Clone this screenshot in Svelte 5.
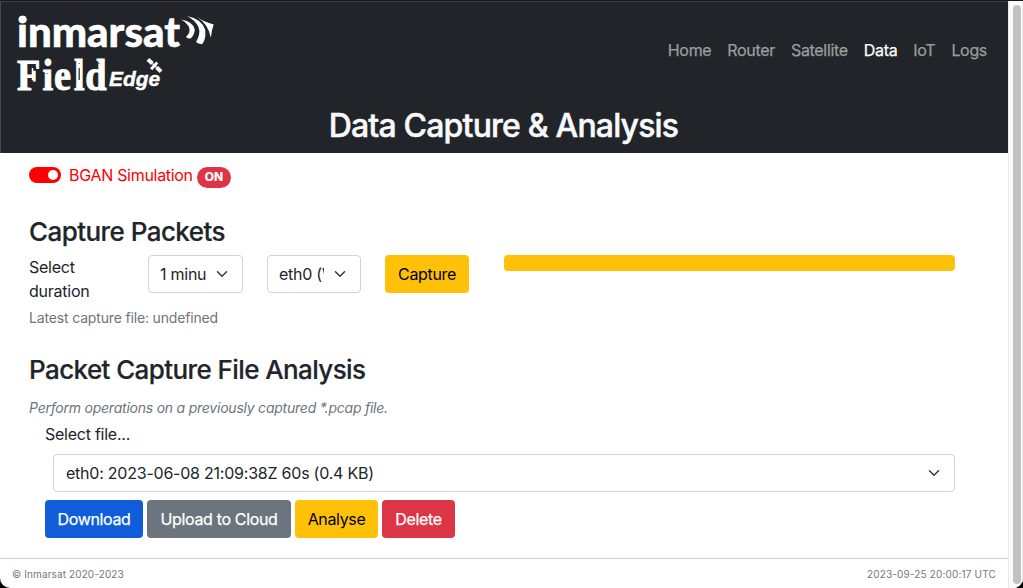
<script>
  const links = ['Home', 'Router', 'Satellite', 'Data', 'IoT', 'Logs'];
  let active = $state('Data');
  let simulation = $state(true);
</script>

{#snippet chevron()}
  <svg class="chevron" viewBox="0 0 16 16" aria-hidden="true"><path d="m2 5 6 6 6-6" /></svg>
{/snippet}

<div class="window">
  <div class="page">
    <header>
      <div class="bar">
        <svg class="logo" viewBox="0 0 220 90" role="img" aria-label="inmarsat Field Edge">
          <g fill="#fff">
            <text class="brand" x="17" y="44.500" textLength="163" lengthAdjust="spacingAndGlyphs">inmarsat</text>
            <circle cx="22.700" cy="17.500" r="3.800" />
            <path d="M181 17.600Q194 20 194.800 28Q194 34 190.500 36.500Q188 37 186 35Q191.500 30 188.500 24Q186 20 181 17.600Z" />
            <path d="M187 14Q202 17 205.300 28Q206 38 202 42.300Q198 42 196 40Q201 32 198.500 25Q195 18 187 14Z" />
            <path d="M196 14.500Q204 20 213.700 22.500Q211.500 28 211 35.700Q209.500 29 206 23.500Q202 18 196 14.500Z" />
            <text class="field" transform="translate(17 88) scale(.87 1)" x="0 29.300 42.500 65.500 78.500" y="0">Field</text>
            <text class="edge" x="109" y="84" textLength="51" lengthAdjust="spacingAndGlyphs">Edge</text>
          </g>
          <g transform="translate(154.500 63.500) rotate(43)" fill="#fff">
            <rect x="-9" y="-2" width="6" height="4" />
            <rect x="3" y="-2" width="6" height="4" />
            <rect x="-3" y="-.7" width="6" height="1.400" />
            <rect x="-1.500" y="-4" width="3" height="9" />
          </g>
          <path d="M32.500 66v12" stroke="#fff" stroke-width="1.500" />
          <g fill="#212529">
            <rect x="78.600" y="66" width="1.200" height="12" />
            <circle cx="79.200" cy="61.500" r=".6" />
            <circle cx="99" cy="61.500" r=".6" />
            <circle cx="47" cy="71.500" r=".6" />
          </g>
        </svg>
        <nav>
          {#each links as link}
            <a href="#{link}" class:active={active === link} onclick={() => (active = link)}>{link}</a>
          {/each}
        </nav>
      </div>
      <h1>Data Capture &amp; Analysis</h1>
    </header>

    <main>
      <label class="simulation">
        <input type="checkbox" bind:checked={simulation} />
        <span class="switch"></span>
        <span class="simname">BGAN Simulation</span>
        <span class="badge">{simulation ? 'ON' : 'OFF'}</span>
      </label>

      <h2 class="capture-title">Capture Packets</h2>
      <div class="capture">
        <span class="duration">Select duration</span>
        <div class="select"><span class="value">1 minute</span>{@render chevron()}</div>
        <div class="select iface"><span class="value">eth0 (WAN)</span>{@render chevron()}</div>
        <button class="warning">Capture</button>
        <div class="progress"></div>
      </div>
      <p class="latest">Latest capture file: undefined</p>

      <h2 class="analysis-title">Packet Capture File Analysis</h2>
      <p class="hint">Perform operations on a previously captured *.pcap file.</p>
      <div class="files">
        <span class="choose">Select file...</span>
        <div class="select file"><span class="value">eth0: 2023-06-08 21:09:38Z 60s (0.4 KB)</span>{@render chevron()}</div>
        <div class="buttons">
          <button class="primary">Download</button>
          <button class="secondary">Upload to Cloud</button>
          <button class="warning analyse">Analyse</button>
          <button class="danger">Delete</button>
        </div>
      </div>
    </main>

    <footer><span class="copy">© Inmarsat 2020-2023</span><span class="time">2023-09-25 20:00:17 UTC</span></footer>
  </div>
  <div class="scroll"><div class="thumb"></div></div>
</div>

<style>
  :global(body) { margin: 0; background: #000; overflow: hidden; }
  * { box-sizing: border-box; }
  .window {
    display: flex; width: 1023px; height: 588px; overflow: hidden;
    background: #fff; border-top: 1px solid #171719; border-radius: 0 0 10px 10px;
    font: 16px/24px Inter, sans-serif; letter-spacing: -.25px; color: #212529;
  }
  .page { width: 1008px; display: flex; flex-direction: column; }
  header { height: 152px; background: #212529; border-top: 1px solid #414246; border-left: 1px solid #45484c; }
  .bar { height: 98px; display: flex; justify-content: space-between; }
  .logo { width: 220px; height: 90px; margin-left: -1px; overflow: visible; }
  .brand { font: 900 41px Lato, sans-serif; letter-spacing: 0; stroke: #fff; stroke-width: .5px; }
  .field { font: bold 44px "Liberation Serif", serif; letter-spacing: 0; stroke: #fff; stroke-width: 1px; }
  .edge { font: italic bold 20px "Liberation Sans", sans-serif; letter-spacing: 0; stroke: #fff; stroke-width: .4px; }
  nav { display: flex; gap: 16px; padding: 36px 21px 0 0; letter-spacing: -.32px; }
  nav a { color: #9b9d9f; text-decoration: none; -webkit-text-stroke: .25px; }
  nav a.active { color: #fff; }
  h1, h2, p { margin: 0; font-weight: 500; white-space: nowrap; }
  h1 { font-size: 32px; line-height: 38px; text-align: center; color: #f8f9fa; letter-spacing: -.82px; margin: 7px 2px 0 0; -webkit-text-stroke: .5px; }
  main { flex: 1; padding: 10px 53px 0 29px; }
  .simulation { display: flex; align-items: flex-start; height: 28px; color: red; }
  input { position: absolute; opacity: 0; }
  .switch { width: 32px; height: 16px; margin: 4px 8px 0 0; padding: 3px; border-radius: 8px; background: red; display: flex; justify-content: flex-end; }
  .switch::after { content: ""; width: 10px; height: 10px; border-radius: 50%; background: #fff; }
  .simname { width: 128px; white-space: nowrap; letter-spacing: -.3px; }
  .badge { width: 34px; height: 21px; margin-top: 4px; border-radius: 11px; background: #dc3545; color: #fff; font: bold 12px/20px Inter, sans-serif; text-align: center; letter-spacing: 0; -webkit-text-stroke: .2px; }
  h2 { font-size: 26px; line-height: 32px; letter-spacing: -.6px; -webkit-text-stroke: .2px; }
  .capture-title { margin-top: 25px; letter-spacing: -.56px; }
  .capture { display: grid; grid-template-columns: 95px 95px 94px 95px 451px; column-gap: 24px; margin-top: 7px; height: 48px; }
  .capture button { width: 84px; }
  .duration { width: 80px; }
  .select { height: 38px; border: 1px solid #ced4da; border-radius: 4px; padding: 0 12px 0 11px; display: flex; align-items: center; justify-content: space-between; }
  .select .value { width: 46px; overflow: hidden; white-space: nowrap; }
  .iface .value { width: 45px; }
  .file { padding-left: 12px; }
  .file .value { width: 400px; letter-spacing: -.23px; }
  .chevron { width: 16px; height: 12px; flex: none; fill: none; stroke: #343a40; stroke-width: 2; stroke-linecap: round; stroke-linejoin: round; }
  button { height: 38px; padding: 0; border: 0; border-radius: 4px; font: inherit; letter-spacing: -.35px; color: #fff; -webkit-text-stroke: .25px; }
  .warning { background: #ffc107; color: #000; -webkit-text-stroke: 0; }
  .progress { height: 16px; border-radius: 4px; background: #ffc107; }
  .latest, .hint { font-size: 14px; line-height: 21px; font-weight: 400; color: #6c757d; letter-spacing: -.16px; }
  .latest { margin-top: 4px; }
  .analysis-title { margin-top: 26px; }
  .hint { margin-top: 11px; font-style: italic; letter-spacing: -.23px; }
  .files { padding-left: 16px; margin-top: 4px; }
  .choose { display: block; }
  .file { margin: 8px 0 8px 8px; }
  .buttons { display: flex; gap: 4px; }
  .primary { width: 98px; background: #105dd9; }
  .secondary { width: 144px; background: #6c757d; }
  .analyse { width: 83px; }
  .danger { width: 73px; background: #dc3545; }
  footer { height: 30px; border-top: 1px solid #cfcfcf; padding: 0 12px; display: flex; justify-content: space-between; font-size: 10px; line-height: 31px; color: #777; letter-spacing: .12px; }
  .time { letter-spacing: .16px; }
  .scroll { width: 15px; padding: 4px 3px 4px 4px; background: #fafafa; border-left: 1px solid #e8e8e8; border-right: 1px solid #ededed; }
  .thumb { height: 579px; width: 8px; border-radius: 4px; background: #c2c2c2; }
</style>
